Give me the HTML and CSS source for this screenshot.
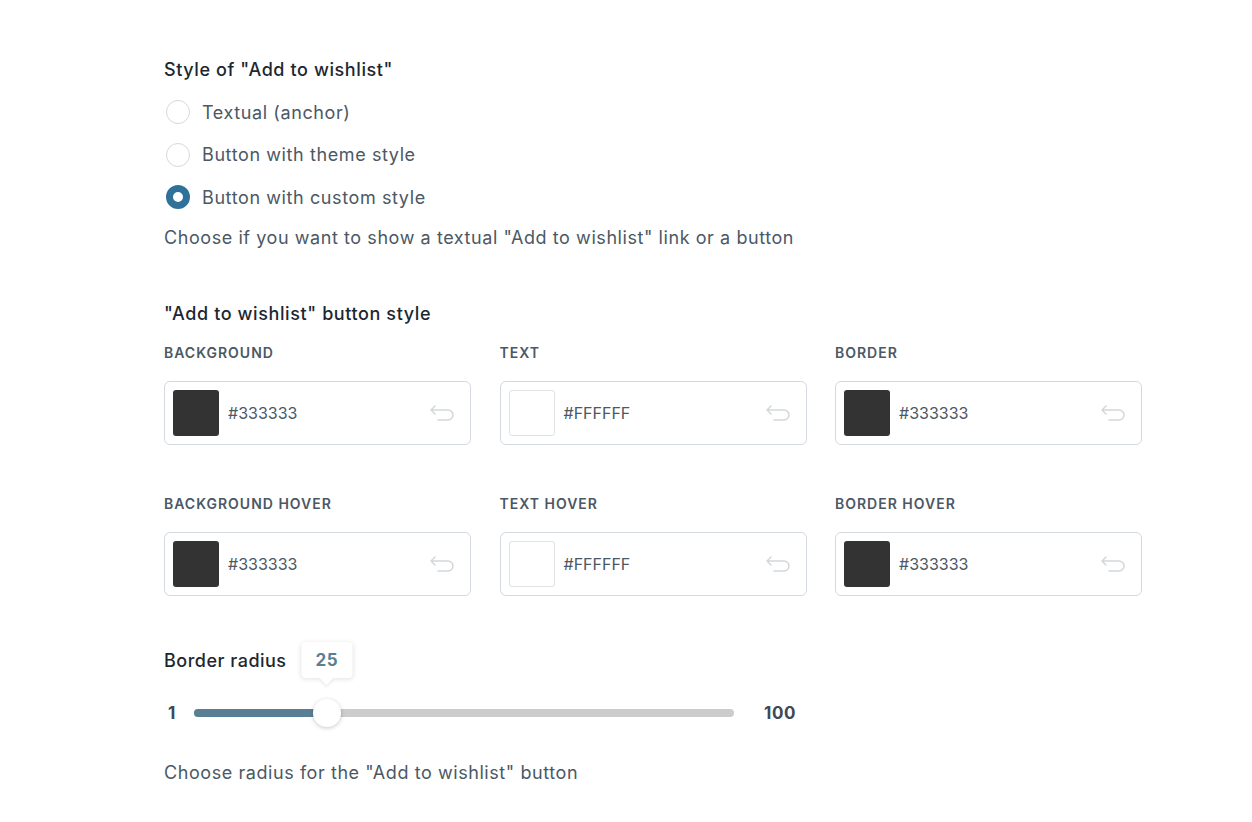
FILE: index.html
```html
<!DOCTYPE html>
<html>
<head>
<meta charset="utf-8">
<link rel="stylesheet" href="styles.css">
</head>
<body>
<div class="page">
  <section class="field">
    <h3 class="field-title">Style of "Add to wishlist"</h3>
    <div class="radios">
      <label class="radio"><span class="radio-dot"></span>Textual (anchor)</label>
      <label class="radio"><span class="radio-dot"></span>Button with theme style</label>
      <label class="radio"><span class="radio-dot checked"></span>Button with custom style</label>
    </div>
    <p class="desc">Choose if you want to show a textual "Add to wishlist" link or a button</p>
  </section>

  <section class="field field-colors">
    <h3 class="field-title">"Add to wishlist" button style</h3>
    <div class="color-grid">
      <div class="color-item">
        <div class="color-label">BACKGROUND</div>
        <div class="color-box"><span class="swatch dark"></span><span class="hex">#333333</span><svg class="undo" viewBox="0 0 26 18" width="26" height="18"><path d="M6 2 L2 6 L6 10 M2 6 H19 a5 5 0 0 1 0 10 H9" fill="none" stroke="#d3d7da" stroke-width="1.5" stroke-linecap="round" stroke-linejoin="round"/></svg></div>
      </div>
      <div class="color-item">
        <div class="color-label">TEXT</div>
        <div class="color-box"><span class="swatch light"></span><span class="hex">#FFFFFF</span><svg class="undo" viewBox="0 0 26 18" width="26" height="18"><path d="M6 2 L2 6 L6 10 M2 6 H19 a5 5 0 0 1 0 10 H9" fill="none" stroke="#d3d7da" stroke-width="1.5" stroke-linecap="round" stroke-linejoin="round"/></svg></div>
      </div>
      <div class="color-item">
        <div class="color-label">BORDER</div>
        <div class="color-box"><span class="swatch dark"></span><span class="hex">#333333</span><svg class="undo" viewBox="0 0 26 18" width="26" height="18"><path d="M6 2 L2 6 L6 10 M2 6 H19 a5 5 0 0 1 0 10 H9" fill="none" stroke="#d3d7da" stroke-width="1.5" stroke-linecap="round" stroke-linejoin="round"/></svg></div>
      </div>
      <div class="color-item">
        <div class="color-label">BACKGROUND HOVER</div>
        <div class="color-box"><span class="swatch dark"></span><span class="hex">#333333</span><svg class="undo" viewBox="0 0 26 18" width="26" height="18"><path d="M6 2 L2 6 L6 10 M2 6 H19 a5 5 0 0 1 0 10 H9" fill="none" stroke="#d3d7da" stroke-width="1.5" stroke-linecap="round" stroke-linejoin="round"/></svg></div>
      </div>
      <div class="color-item">
        <div class="color-label">TEXT HOVER</div>
        <div class="color-box"><span class="swatch light"></span><span class="hex">#FFFFFF</span><svg class="undo" viewBox="0 0 26 18" width="26" height="18"><path d="M6 2 L2 6 L6 10 M2 6 H19 a5 5 0 0 1 0 10 H9" fill="none" stroke="#d3d7da" stroke-width="1.5" stroke-linecap="round" stroke-linejoin="round"/></svg></div>
      </div>
      <div class="color-item">
        <div class="color-label">BORDER HOVER</div>
        <div class="color-box"><span class="swatch dark"></span><span class="hex">#333333</span><svg class="undo" viewBox="0 0 26 18" width="26" height="18"><path d="M6 2 L2 6 L6 10 M2 6 H19 a5 5 0 0 1 0 10 H9" fill="none" stroke="#d3d7da" stroke-width="1.5" stroke-linecap="round" stroke-linejoin="round"/></svg></div>
      </div>
    </div>
  </section>

  <section class="field field-slider">
    <h3 class="field-title plain">Border radius</h3>
    <div class="slider">
      <span class="slider-min">1</span>
      <div class="track">
        <div class="track-fill" style="width: 24.6%"></div>
        <div class="thumb" style="left: 24.6%">
          <div class="tip">25</div>
        </div>
      </div>
      <span class="slider-max">100</span>
    </div>
    <p class="desc">Choose radius for the "Add to wishlist" button</p>
  </section>
</div>
</body>
</html>
```

FILE: styles.css
```css
* { box-sizing: border-box; }
html, body { margin: 0; padding: 0; background: #fff; }
body {
  font-family: Inter, "Noto Sans", "Liberation Sans", sans-serif;
  color: #1d2731;
}
.page {
  padding: 58px 0 0 164px;
  width: 1252px;
}
.field-title {
  margin: 0;
  font-size: 18px;
  line-height: 24px;
  font-weight: 500;
  letter-spacing: 0.6px;
  color: #1d2731;
}
.radios {
  margin-top: 9px;
  display: flex;
  flex-direction: column;
}
.radio {
  display: flex;
  align-items: center;
  height: 42.5px;
  font-size: 18px;
  letter-spacing: 0.6px;
  color: #4b5865;
}
.radio-dot {
  width: 24px;
  height: 24px;
  border-radius: 50%;
  border: 1px solid #d5d9dd;
  margin: 0 12px 0 2px;
  background: #fff;
}
.radio-dot.checked {
  border: 7.5px solid #2f7199;
  background: #fff;
}
.desc {
  margin: 6px 0 0;
  font-size: 18px;
  line-height: 26px;
  letter-spacing: 0.57px;
  color: #4b5865;
}
.field-colors { margin-top: 51px; }
.color-grid {
  margin-top: 18px;
  display: grid;
  grid-template-columns: repeat(3, 307px);
  column-gap: 28.5px;
  row-gap: 50px;
}
.color-label {
  font-size: 14px;
  line-height: 18px;
  font-weight: 600;
  letter-spacing: 1px;
  color: #4b5865;
}
.color-box {
  margin-top: 19px;
  height: 64px;
  border: 1px solid #d3d9de;
  border-radius: 6px;
  display: flex;
  align-items: center;
  padding: 0 15px 0 8px;
}
.swatch {
  width: 46px;
  height: 46px;
  border-radius: 3px;
  flex: none;
}
.swatch.dark { background: #333333; }
.swatch.light { background: #fff; border: 1px solid #dfe3e6; }
.hex {
  margin-left: 9px;
  font-size: 16px;
  color: #4b5865;
  flex: 1;
}
.undo { flex: none; }
.field-slider { margin-top: 53px; }
.field-title.plain { font-size: 18px; font-weight: 500; letter-spacing: 0.5px; }
.slider {
  margin-top: 28px;
  display: flex;
  align-items: center;
  height: 24px;
  width: 640px;
}
.slider-min {
  font-size: 17px;
  font-weight: 700;
  color: #3d4955;
  width: 30px;
  padding-left: 4px;
}
.track {
  position: relative;
  width: 540px;
  height: 8px;
  border-radius: 4px;
  background: #cccccc;
}
.track-fill {
  height: 100%;
  border-radius: 4px;
  background: #5a7f95;
}
.thumb {
  position: absolute;
  top: 50%;
  width: 28px;
  height: 28px;
  margin: -14px 0 0 -14px;
  border-radius: 50%;
  background: #fff;
  box-shadow: 0 1px 4px rgba(0,0,0,0.22);
}
.tip {
  position: absolute;
  bottom: 49px;
  left: 50%;
  transform: translateX(-50%);
  width: 51px;
  height: 36px;
  background: #fff;
  border-radius: 4px;
  box-shadow: 0 1px 5px rgba(0,0,0,0.12);
  font-size: 17px;
  font-weight: 700;
  letter-spacing: 0.5px;
  color: #5a7f95;
  display: flex;
  align-items: center;
  justify-content: center;
}
.tip::after {
  content: "";
  position: absolute;
  left: 50%;
  bottom: -5px;
  width: 10px;
  height: 10px;
  margin-left: -5px;
  background: #fff;
  transform: rotate(45deg);
  box-shadow: 2px 2px 3px rgba(0,0,0,0.06);
}
.slider-max {
  margin-left: 30px;
  font-size: 17px;
  font-weight: 700;
  letter-spacing: 0.6px;
  color: #3d4955;
}
.field-slider .desc { margin-top: 35px; }
```
